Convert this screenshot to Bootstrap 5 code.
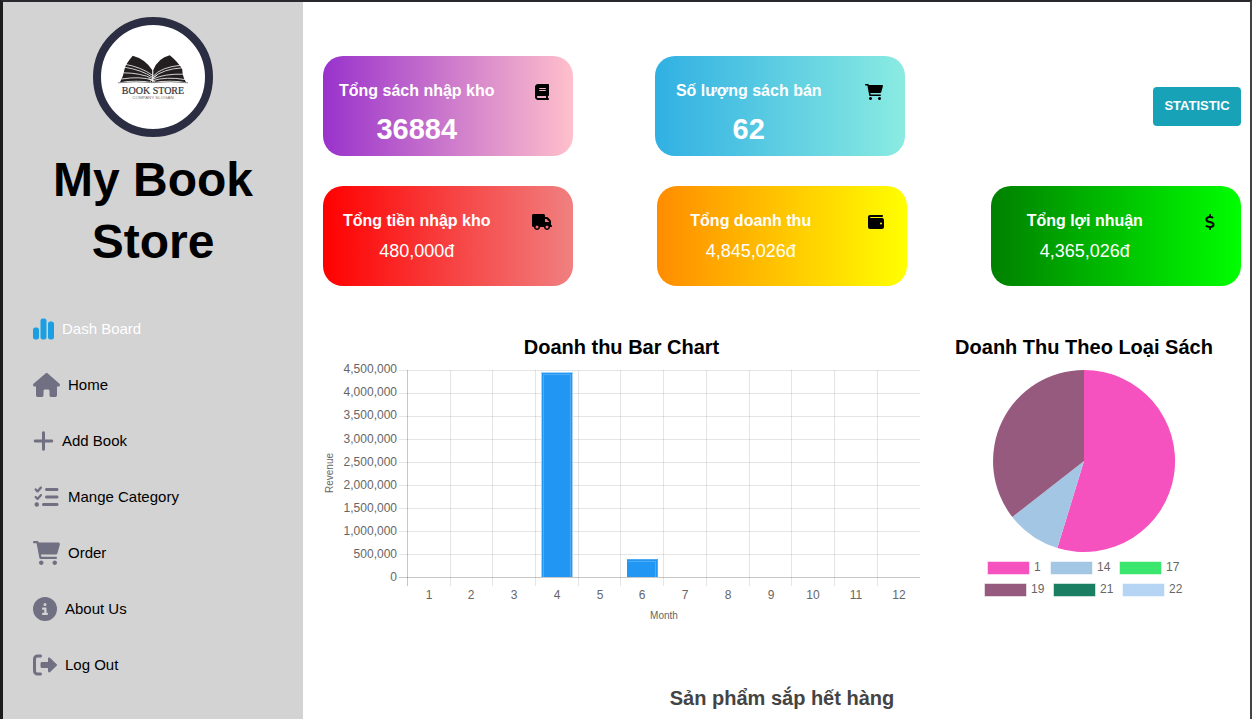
<!DOCTYPE html>
<html lang="vi">
<head>
<meta charset="utf-8">
<meta name="viewport" content="width=device-width, initial-scale=1">
<title>My Book Store</title>
<link href="https://cdn.jsdelivr.net/npm/bootstrap@5.3.0/dist/css/bootstrap.min.css" rel="stylesheet">
<style>
  body { font-family: "Liberation Sans", Arial, sans-serif; color: #000; background: #fff; }
  .app-frame { border-top: 2px solid #2a282d; border-left: 3px solid #1c1c1e; border-right: 2px solid #444; }
  .side-panel { flex: 0 0 300px; background: #d3d3d3; padding-top: 15px; }
  .brand-logo { width: 120px; height: 120px; border: 8px solid #2b2d42; }
  .brand-name { font-size: 48px; line-height: 62px; margin: 12px 40px 28px; }
  .side-link { height: 56px; padding-left: 30px; font-size: 15px; color: #000; }
  .side-link svg { height: 24px; fill: #707082; }
  .side-link.active { color: #fff; }
  .side-link.active svg { fill: #1b9fe3; }
  .main-panel { padding: 54px 9px 8px 20px; }
  .stat-stack { gap: 30px; }
  .stat-card { width: 250px; height: 100px; border-radius: 20px; color: #fff; padding-top: 23px; }
  .stat-card h2 { font-size: 16px; line-height: 24px; font-weight: 700; }
  .stat-card p { font-size: 18px; line-height: 20px; }
  .stat-card p.stat-count { font-size: 29px; line-height: 36px; font-weight: 700; }
  .stat-card svg { height: 16px; margin-top: 5px; fill: #000; }
  .bg-violet { background: linear-gradient(to right, #9932cc, #ffc0cb); }
  .bg-sky { background: linear-gradient(to right, #30b0e3, #8aebe1); }
  .bg-red { background: linear-gradient(to right, #f00, #f08080); }
  .bg-sun { background: linear-gradient(to right, #ff8c00, #ff0); }
  .bg-leaf { background: linear-gradient(to right, #008000, #0f0); }
  .action-slot { width: 254px; }
  .btn-stat { width: 88px; height: 39px; font-size: 13px; background: #18a2b8; color: #fff; border-radius: 4px; }
  .btn-stat:hover { background: #138496; color: #fff; }
  .charts { gap: 7px; }
  .chart-bar { flex: 597 1 0; min-width: 0; }
  .chart-pie { flex: 314 1 0; min-width: 0; }
  .section-title { font-size: 20px; line-height: 26px; font-weight: 700; }
  .charts text { font-family: "Liberation Sans", Arial, sans-serif; font-size: 12px; fill: #666; }
  .charts .axis-name { font-size: 10px; }
  .low-stock { margin-top: 55px; color: #444; }
</style>
</head>
<body>
<div class="app-frame d-flex min-vh-100">
  <aside class="side-panel">
    <div class="brand-logo rounded-circle bg-white mx-auto overflow-hidden">
      <svg class="d-block w-100" viewBox="0 0 1040 1040" role="img" aria-label="Book Store">
        <g fill="#231f20">
          <path d="M317 308Q440 340 512 450V572Q350 545 190 572Q225 510 236 440Q240 400 317 308Z"/>
          <path d="M688 302Q570 330 523 450V572Q690 545 850 572Q815 520 812 440Q770 370 688 302Z"/>
        </g>
        <g fill="none" stroke="#fff" stroke-width="8">
          <path d="M235 392Q400 420 514 502M225 420Q410 450 514 522M222 478Q400 480 514 535M205 540Q400 510 514 552"/>
          <path d="M805 402Q600 420 521 512M815 428Q620 440 521 526M830 492Q640 485 521 540M840 545Q650 515 521 555"/>
          <path d="M485 575Q515 530 560 500M475 535Q520 555 550 575"/>
        </g>
        <path d="M170 578Q340 558 510 576Q700 558 870 578" fill="none" stroke="#666" stroke-width="8"/>
        <text x="520" y="688" text-anchor="middle" font-family="Liberation Serif, serif" font-size="100" fill="#333" stroke="#333" stroke-width="2">BOOK STORE</text>
        <text x="520" y="740" text-anchor="middle" font-family="Liberation Sans, sans-serif" font-size="44" fill="#777">COMPANY SLOGAN</text>
      </svg>
    </div>
    <h1 class="brand-name text-center fw-bold">My Book Store</h1>
    <nav class="d-flex flex-column">
      <a href="#" class="side-link active d-flex align-items-center gap-2 text-decoration-none" aria-current="page">
        <svg viewBox="0 0 448 512" aria-hidden="true"><path d="M160 80c0-26.500 21.500-48 48-48h32c26.500 0 48 21.500 48 48V432c0 26.500-21.500 48-48 48H208c-26.500 0-48-21.500-48-48V80zM0 272c0-26.500 21.500-48 48-48H80c26.500 0 48 21.500 48 48V432c0 26.500-21.500 48-48 48H48c-26.500 0-48-21.500-48-48V272zM368 96h32c26.500 0 48 21.500 48 48V432c0 26.500-21.500 48-48 48H368c-26.500 0-48-21.500-48-48V144c0-26.500 21.500-48 48-48z"/></svg>Dash Board</a>
      <a href="#" class="side-link d-flex align-items-center gap-2 text-decoration-none">
        <svg viewBox="0 0 576 512" aria-hidden="true"><path d="M575.8 255.500c0 18-15 32.100-32 32.100h-32l.7 160.200c0 2.700-.2 5.400-.5 8.100V472c0 22.100-17.900 40-40 40H456c-1.100 0-2.200 0-3.300-.1c-1.400 .1-2.800 .1-4.200 .1H416 392c-22.100 0-40-17.900-40-40V448 384c0-17.700-14.300-32-32-32H256c-17.700 0-32 14.300-32 32v64 24c0 22.100-17.900 40-40 40H160 128.100c-1.500 0-3-.1-4.500-.2c-1.200 .1-2.400 .2-3.600 .2H104c-22.100 0-40-17.900-40-40V360c0-.9 0-1.900 .1-2.800V287.600H32c-18 0-32-14-32-32.100c0-9 3-17 10-24L266.400 8c7-7 15-8 22-8s15 2 21 7L564.800 231.500c8 7 12 15 11 24z"/></svg>Home</a>
      <a href="#" class="side-link d-flex align-items-center gap-2 text-decoration-none">
        <svg viewBox="0 0 448 512" aria-hidden="true"><path d="M256 80c0-17.700-14.300-32-32-32s-32 14.300-32 32V224H48c-17.700 0-32 14.300-32 32s14.300 32 32 32H192V432c0 17.700 14.300 32 32 32s32-14.300 32-32V288H400c17.700 0 32-14.300 32-32s-14.300-32-32-32H256V80z"/></svg>Add Book</a>
      <a href="#" class="side-link d-flex align-items-center gap-2 text-decoration-none">
        <svg viewBox="-32 0 576 512" aria-hidden="true"><path d="M152.100 38.200c9.900 8.900 10.700 24 1.800 33.900l-72 80c-4.400 4.900-10.600 7.800-17.200 7.900s-12.900-2.400-17.600-7L7 113C-2.300 103.600-2.300 88.400 7 79s24.600-9.400 33.900 0l22.100 22.100 55.100-61.200c8.900-9.900 24-10.700 33.900-1.800zm0 160c9.900 8.900 10.700 24 1.800 33.900l-72 80c-4.400 4.900-10.600 7.800-17.200 7.900s-12.900-2.400-17.600-7L7 273c-9.400-9.400-9.400-24.600 0-33.900s24.600-9.400 33.900 0l22.100 22.100 55.100-61.200c8.900-9.900 24-10.700 33.900-1.800zM224 96c0-17.700 14.300-32 32-32H480c17.700 0 32 14.300 32 32s-14.300 32-32 32H256c-17.700 0-32-14.300-32-32zm0 160c0-17.700 14.300-32 32-32H480c17.700 0 32 14.300 32 32s-14.300 32-32 32H256c-17.700 0-32-14.300-32-32zM160 416c0-17.700 14.300-32 32-32H480c17.700 0 32 14.300 32 32s-14.300 32-32 32H192c-17.700 0-32-14.300-32-32zM48 368a48 48 0 1 1 0 96 48 48 0 1 1 0-96z"/></svg>Mange Category</a>
      <a href="#" class="side-link d-flex align-items-center gap-2 text-decoration-none">
        <svg viewBox="0 0 576 512" aria-hidden="true"><path id="cart" d="M96 0C107.500 0 117.400 8.190 119.600 19.510L121.100 32H541.800C562.100 32 578.300 52.250 572.600 72.660L518.600 264.700C514.700 278.500 502.100 288 487.800 288H170.700L179.900 336H488C501.300 336 512 346.700 512 360C512 373.300 501.300 384 488 384H159.100C148.500 384 138.600 375.800 136.400 364.500L76.140 48H24C10.750 48 0 37.250 0 24C0 10.750 10.750 0 24 0H96zM128 464C128 437.500 149.500 416 176 416C202.500 416 224 437.500 224 464C224 490.500 202.500 512 176 512C149.500 512 128 490.500 128 464zM512 464C512 490.500 490.500 512 464 512C437.500 512 416 490.500 416 464C416 437.500 437.500 416 464 416C490.500 416 512 437.500 512 464z"/></svg>Order</a>
      <a href="#" class="side-link d-flex align-items-center gap-2 text-decoration-none">
        <svg viewBox="0 0 512 512" aria-hidden="true"><path d="M256 512A256 256 0 1 0 256 0a256 256 0 1 0 0 512zM216 336h24V272H216c-13.300 0-24-10.700-24-24s10.700-24 24-24h48c13.300 0 24 10.700 24 24v88h8c13.300 0 24 10.700 24 24s-10.700 24-24 24H216c-13.300 0-24-10.700-24-24s10.700-24 24-24zm40-208a32 32 0 1 1 0 64 32 32 0 1 1 0-64z"/></svg>About Us</a>
      <a href="#" class="side-link d-flex align-items-center gap-2 text-decoration-none">
        <svg viewBox="0 0 512 512" aria-hidden="true"><path d="M96 480h64C177.700 480 192 465.700 192 448S177.700 416 160 416H96c-17.670 0-32-14.330-32-32V128c0-17.670 14.330-32 32-32h64C177.700 96 192 81.670 192 64S177.700 32 160 32H96C42.980 32 0 74.980 0 128v256C0 437 42.980 480 96 480zM504.800 238.500l-144.100-136c-6.975-6.578-17.200-8.375-26-4.594c-8.803 3.797-14.510 12.470-14.510 22.050l-.0918 72l-128-.001c-17.690 0-32.020 14.330-32.020 32v64c0 17.670 14.340 32 32.020 32l128 .001l.0918 71.100c0 9.578 5.707 18.250 14.510 22.050c8.803 3.781 19.030 1.984 26-4.594l144.100-136C514.400 264.400 514.400 247.600 504.800 238.500z"/></svg>Log Out</a>
    </nav>
  </aside>

  <main class="main-panel flex-grow-1">
    <div class="stat-stack d-flex flex-column">
      <div class="d-flex justify-content-between align-items-center">
        <section class="stat-card bg-violet">
          <div class="row g-0 text-center">
            <div class="col-9"><h2 class="mb-2">Tổng sách nhập kho</h2><p class="stat-count mb-0">36884</p></div>
            <div class="col-3"><svg class="d-block mx-auto" viewBox="0 0 448 512" aria-hidden="true"><path d="M96 0C43 0 0 43 0 96V416c0 53 43 96 96 96H384h32c17.700 0 32-14.300 32-32s-14.300-32-32-32V384c17.700 0 32-14.300 32-32V32c0-17.700-14.300-32-32-32H384 96zm0 384H352v64H96c-17.700 0-32-14.300-32-32s14.300-32 32-32zm32-240c0-8.800 7.200-16 16-16H336c8.800 0 16 7.200 16 16s-7.200 16-16 16H144c-8.800 0-16-7.200-16-16zm16 48H336c8.800 0 16 7.200 16 16s-7.200 16-16 16H144c-8.800 0-16-7.200-16-16s7.200-16 16-16z"/></svg></div>
          </div>
        </section>
        <section class="stat-card bg-sky">
          <div class="row g-0 text-center">
            <div class="col-9"><h2 class="mb-2">Số lượng sách bán</h2><p class="stat-count mb-0">62</p></div>
            <div class="col-3"><svg class="d-block mx-auto" viewBox="0 0 576 512" aria-hidden="true"><use href="#cart"/></svg></div>
          </div>
        </section>
        <div class="action-slot text-end"><button type="button" class="btn btn-stat fw-bold border-0 p-0">STATISTIC</button></div>
      </div>
      <div class="d-flex justify-content-between">
        <section class="stat-card bg-red">
          <div class="row g-0 text-center">
            <div class="col-9"><h2 class="mb-2">Tổng tiền nhập kho</h2><p class="mb-0">480,000đ</p></div>
            <div class="col-3"><svg class="d-block mx-auto" viewBox="0 0 640 512" aria-hidden="true"><path d="M48 0C21.500 0 0 21.500 0 48V368c0 26.500 21.500 48 48 48H64c0 53 43 96 96 96s96-43 96-96H384c0 53 43 96 96 96s96-43 96-96h32c17.700 0 32-14.300 32-32s-14.300-32-32-32V288 256 237.300c0-17-6.700-33.300-18.700-45.300L512 114.700c-12-12-28.300-18.700-45.300-18.700H416V48c0-26.500-21.500-48-48-48H48zM416 160h50.700L544 237.300V256H416V160zM112 416a48 48 0 1 1 96 0 48 48 0 1 1 -96 0zm368-48a48 48 0 1 1 0 96 48 48 0 1 1 0-96z"/></svg></div>
          </div>
        </section>
        <section class="stat-card bg-sun">
          <div class="row g-0 text-center">
            <div class="col-9"><h2 class="mb-2">Tổng doanh thu</h2><p class="mb-0">4,845,026đ</p></div>
            <div class="col-3"><svg class="d-block mx-auto" viewBox="0 0 512 512" aria-hidden="true"><path d="M64 32C28.700 32 0 60.700 0 96V416c0 35.300 28.700 64 64 64H448c35.300 0 64-28.700 64-64V192c0-35.300-28.700-64-64-64H80c-8.800 0-16-7.200-16-16s7.200-16 16-16H448c17.700 0 32-14.300 32-32s-14.300-32-32-32H64zM416 272a32 32 0 1 1 0 64 32 32 0 1 1 0-64z"/></svg></div>
          </div>
        </section>
        <section class="stat-card bg-leaf">
          <div class="row g-0 text-center">
            <div class="col-9"><h2 class="mb-2">Tổng lợi nhuận</h2><p class="mb-0">4,365,026đ</p></div>
            <div class="col-3"><svg class="d-block mx-auto" viewBox="0 0 320 512" aria-hidden="true"><path d="M160 0c17.700 0 32 14.300 32 32V67.700c1.600 .2 3.100 .4 4.700 .7c.4 .1 .7 .1 1.100 .2l48 8.800c17.400 3.200 28.900 19.900 25.700 37.200s-19.900 28.900-37.200 25.700l-47.500-8.700c-31.300-4.600-58.900-1.500-78.300 6.200s-27.200 18.300-29 28.100c-2 10.700-.5 16.700 1.200 20.400c1.800 3.900 5.500 8.300 12.800 13.200c16.300 10.700 41.300 17.700 73.700 26.300l2.900 .8c28.600 7.600 63.600 16.800 89.600 33.800c14.200 9.300 27.600 21.900 35.900 39.500c8.500 17.900 10.300 37.900 6.400 59.200c-6.900 38-33.100 63.400-65.600 76.700c-13.700 5.600-28.600 9.200-44.400 11V480c0 17.700-14.300 32-32 32s-32-14.300-32-32V445.100c-.4-.1-.9-.1-1.300-.2l-.2 0c-24.400-3.800-64.500-14.300-91.500-26.300c-16.100-7.200-23.400-26.100-16.200-42.200s26.100-23.400 42.200-16.200c20.900 9.300 55.300 18.500 75.200 21.600c31.900 4.700 58.200 2 76-5.300c16.900-6.900 24.600-16.900 26.800-28.900c1.900-10.600 .4-16.700-1.300-20.400c-1.900-4-5.600-8.400-13-13.300c-16.400-10.700-41.500-17.700-74-26.300l-2.800-.7C119.400 279.300 84.400 270 58.400 253c-14.200-9.300-27.500-22-35.800-39.600c-8.400-17.900-10.100-37.900-6.100-59.200C23.700 116 52.300 91.200 84.800 78.300c13.300-5.300 27.900-8.900 43.200-11V32c0-17.700 14.300-32 32-32z"/></svg></div>
          </div>
        </section>
      </div>
    </div>

    <div class="charts d-flex mt-5">
      <section class="chart-bar">
        <h2 class="section-title text-center mb-0">Doanh thu Bar Chart</h2>
        <svg class="d-block w-100" viewBox="0 0 597 270" role="img" aria-label="Doanh thu Bar Chart">
          <g fill="none" stroke="#000" stroke-opacity=".1">
            <path d="M76 10.500H597M76 33.500H597M76 56.500H597M76 79.500H597M76 102.500H597M76 125.500H597M76 148.500H597M76 171.500H597M76 194.500H597"/>
            <path d="M127.500 10V226M169.500 10V226M212.500 10V226M255.500 10V226M297.500 10V226M340.500 10V226M383.500 10V226M426.500 10V226M468.500 10V226M511.500 10V226M554.500 10V226"/>
            <path d="M84.500 10V226M76 217.500H597" stroke-opacity=".22"/>
          </g>
          <g fill="#2196f3">
            <rect x="218" y="12" width="32" height="205" fill="#a5d4fa"/>
            <rect x="219" y="13" width="30" height="204"/>
            <path d="M220.500 217V14.500H247.500V217" fill="none" stroke="#4eabf5"/>
            <rect x="304" y="199" width="31" height="18"/>
            <path d="M305 201.500H332.500V217M304 199.500H334.500V217" fill="none" stroke="#4eabf5"/>
          </g>
          <g text-anchor="end">
            <text x="74" y="13">4,500,000</text><text x="74" y="36">4,000,000</text><text x="74" y="59">3,500,000</text>
            <text x="74" y="83">3,000,000</text><text x="74" y="106">2,500,000</text><text x="74" y="129">2,000,000</text>
            <text x="74" y="152">1,500,000</text><text x="74" y="175">1,000,000</text><text x="74" y="198">500,000</text>
            <text x="74" y="221">0</text>
          </g>
          <g text-anchor="middle">
            <text x="106" y="239">1</text><text x="148" y="239">2</text><text x="191" y="239">3</text><text x="234" y="239">4</text>
            <text x="277" y="239">5</text><text x="319" y="239">6</text><text x="362" y="239">7</text><text x="405" y="239">8</text>
            <text x="448" y="239">9</text><text x="490" y="239">10</text><text x="533" y="239">11</text><text x="576" y="239">12</text>
            <text class="axis-name" x="341" y="259">Month</text>
            <text class="axis-name" transform="translate(10 113) rotate(-90)">Revenue</text>
          </g>
        </svg>
      </section>
      <section class="chart-pie">
        <h2 class="section-title text-center mb-0">Doanh Thu Theo Loại Sách</h2>
        <svg class="d-block w-100" viewBox="0 0 314 245" role="img" aria-label="Doanh Thu Theo Loại Sách">
          <path d="M157 101V10A91 91 0 1 1 130.400 188Z" fill="#f551bf"/>
          <path d="M157 101L130.400 188A91 91 0 0 1 85.300 157Z" fill="#a2c6e3"/>
          <path d="M157 101L85.300 157A91 91 0 0 1 157 10Z" fill="#975a7f"/>
          <g stroke="#fff" stroke-opacity=".5">
            <rect x="60.500" y="201.500" width="42" height="13" fill="#f551bf"/>
            <rect x="123.500" y="201.500" width="42" height="13" fill="#a2c6e3"/>
            <rect x="192.500" y="201.500" width="42" height="13" fill="#3be66d"/>
            <rect x="57.500" y="223.500" width="42" height="13" fill="#975a7f"/>
            <rect x="126.500" y="223.500" width="42" height="13" fill="#1a7f62"/>
            <rect x="195.500" y="223.500" width="42" height="13" fill="#b6d5f4"/>
          </g>
          <text x="107" y="211">1</text><text x="170" y="211">14</text><text x="239" y="211">17</text>
          <text x="104" y="233">19</text><text x="173" y="233">21</text><text x="242" y="233">22</text>
        </svg>
      </section>
    </div>

    <h2 class="low-stock section-title text-center mb-0">Sản phẩm sắp hết hàng</h2>
  </main>
</div>
<script src="https://cdn.jsdelivr.net/npm/bootstrap@5.3.0/dist/js/bootstrap.bundle.min.js"></script>
</body>
</html>
